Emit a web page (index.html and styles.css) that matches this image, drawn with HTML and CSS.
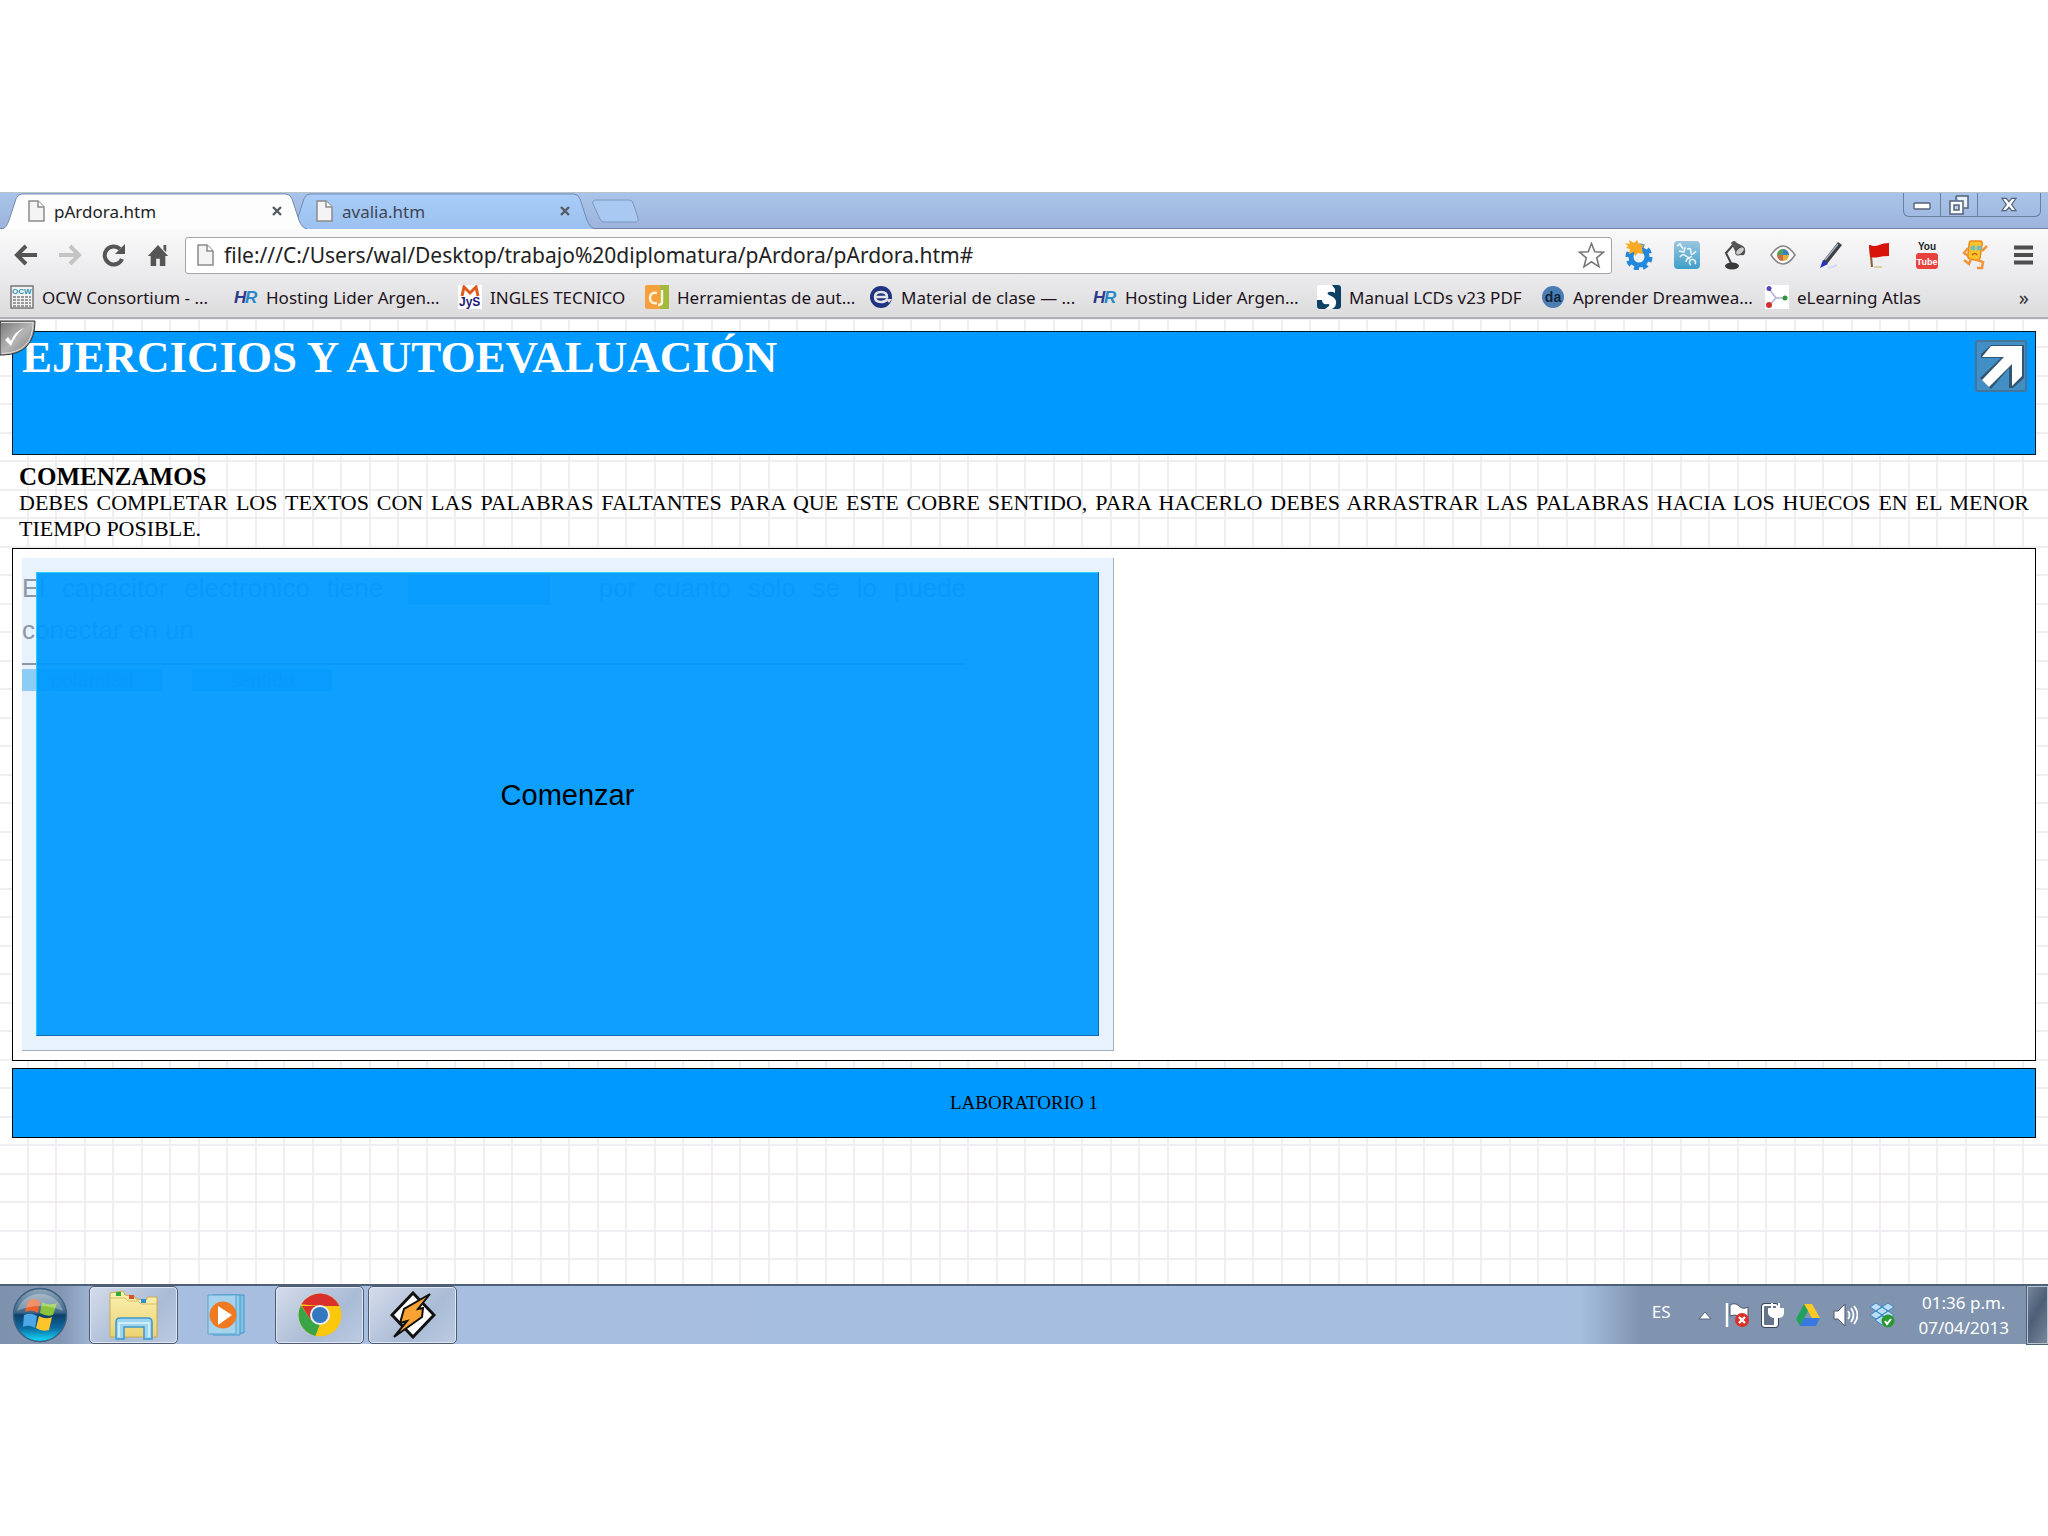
FILE: index.html
```html
<!DOCTYPE html>
<html lang="es">
<head>
  <meta charset="UTF-8">
  <meta name="viewport" content="width=device-width, initial-scale=1.0">
  <title>pArdora.htm</title>
  <link rel="stylesheet" href="styles.css">
</head>
<body>
  <svg width="0" height="0" class="defs" aria-hidden="true">
    <defs>
      <linearGradient id="tab-blue" x1="0" y1="0" x2="0" y2="1">
        <stop offset="0" stop-color="#a9cdf8"/><stop offset="1" stop-color="#9cc1f0"/>
      </linearGradient>
      <linearGradient id="orb" x1="0" y1="0" x2="0" y2="1">
        <stop offset="0" stop-color="#8fa6b8"/><stop offset=".45" stop-color="#3d6788"/>
        <stop offset=".5" stop-color="#0d3f68"/><stop offset=".75" stop-color="#0d6ca3"/><stop offset="1" stop-color="#13e0ff"/>
      </linearGradient>
      <linearGradient id="folder" x1="0" y1="0" x2="0" y2="1">
        <stop offset="0" stop-color="#fbf2b4"/><stop offset="1" stop-color="#ecd272"/>
      </linearGradient>
      <linearGradient id="metal" x1="0" y1="0" x2="1" y2="1">
        <stop offset="0" stop-color="#777"/><stop offset=".5" stop-color="#b5b5b5"/><stop offset="1" stop-color="#777"/>
      </linearGradient>
      <linearGradient id="teal" x1="0" y1="0" x2="0" y2="1">
        <stop offset="0" stop-color="#9cc6e0"/><stop offset="1" stop-color="#3d9fc9"/>
      </linearGradient>
      <symbol id="file" viewBox="0 0 17 22">
        <path d="M1 1h9l6 6v14H1z" fill="#f4f4f4" stroke="#8b8b8b" stroke-width="1.5"/>
        <path d="M10 1v6h6" fill="#fff" stroke="#8b8b8b" stroke-width="1.5"/>
      </symbol>
      <symbol id="cross" viewBox="0 0 12 12">
        <path d="M2 2l8 8M10 2l-8 8" stroke="#565b62" stroke-width="2.4"/>
      </symbol>
      <symbol id="hr" viewBox="0 0 24 24">
        <text x="0" y="18" font-family="Liberation Sans" font-size="17" font-weight="bold" font-style="italic" fill="#2d3a8c">H</text>
        <text x="11" y="18" font-family="Liberation Sans" font-size="17" font-weight="bold" font-style="italic" fill="#2a87c8">R</text>
      </symbol>
    </defs>
  </svg>

  <div class="screen">
    <header class="browser">
      <div class="tab-strip">
        <div class="tab tab-active">
          <svg class="tab-shape" viewBox="0 0 305 37" preserveAspectRatio="none"><path d="M0 37C4 36 5 33 7 28L14 6Q16 1 20 1H284Q288 1 290 6L297 28C299 33 301 36 305 37" fill="#fdfdfe" stroke="#7388ab"/></svg>
          <svg class="file-icon"><use href="#file"/></svg>
          <a class="tab-title" href="#">pArdora.htm</a>
          <button class="tab-close" aria-label="Cerrar pArdora.htm"><svg width="12" height="12"><use href="#cross"/></svg></button>
        </div>
        <div class="tab">
          <svg class="tab-shape" viewBox="0 0 305 37" preserveAspectRatio="none"><path d="M0 37C4 36 5 33 7 28L14 6Q16 1 20 1H284Q288 1 290 6L297 28C299 33 301 36 305 37" fill="url(#tab-blue)" stroke="#7388ab"/></svg>
          <svg class="file-icon"><use href="#file"/></svg>
          <a class="tab-title" href="#">avalia.htm</a>
          <button class="tab-close" aria-label="Cerrar avalia.htm"><svg width="12" height="12"><use href="#cross"/></svg></button>
        </div>
        <button class="new-tab" aria-label="Nueva pestaña"><svg width="48" height="24" viewBox="0 0 48 24"><path d="M4 1H37Q40 1 41 4L46 19Q47 23 43 23H12Q9 23 8 20L1 5Q0 1 4 1Z" fill="#a9c9f3" stroke="#7f97bd"/></svg></button>
        <div class="window-controls">
          <button aria-label="Minimizar"><svg width="18" height="12" viewBox="0 0 18 12"><rect x="1" y="4" width="16" height="6" rx="1" fill="#fff" stroke="#53627c" stroke-width="1.4"/></svg></button>
          <button aria-label="Restaurar"><svg width="20" height="20" viewBox="0 0 20 20"><path d="M7 1h12v12h-4M7 1v4" fill="#e8f0fb" stroke="#53627c" stroke-width="1.5"/><rect x="1" y="6" width="13" height="13" fill="#fff" stroke="#53627c" stroke-width="1.5"/><rect x="5" y="10" width="5" height="5" fill="#bcd0ec" stroke="#53627c" stroke-width="1.5"/></svg></button>
          <button class="close-window" aria-label="Cerrar"><svg width="16" height="15" viewBox="0 0 18 16"><path d="M1 1h5l3 4 3-4h5l-5 7 5 7h-5l-3-4-3 4H1l5-7z" fill="#fff" stroke="#53627c" stroke-width="1.4"/></svg></button>
        </div>
      </div>

      <div class="toolbar">
        <button class="nav-btn" aria-label="Atrás"><svg width="24" height="24" viewBox="0 0 24 24"><path d="M12 3L3 12l9 9M3 12h20" fill="none" stroke="#555" stroke-width="4"/></svg></button>
        <button class="nav-btn" aria-label="Adelante"><svg width="24" height="24" viewBox="0 0 24 24"><path d="M12 3l9 9-9 9M21 12H1" fill="none" stroke="#c4c4c4" stroke-width="4"/></svg></button>
        <button class="nav-btn" aria-label="Recargar"><svg width="24" height="24" viewBox="0 0 24 24"><path d="M20 16a9 9 0 1 1-2-10" fill="none" stroke="#555" stroke-width="4"/><path d="M23 1v10H13z" fill="#555"/></svg></button>
        <button class="nav-btn" aria-label="Inicio"><svg width="22" height="24" viewBox="0 0 24 24"><path d="M12 1l11 12h-3v11h-6v-8h-4v8H4V13H1z" fill="#555"/><path d="M18 1h3v8l-3-3z" fill="#555"/></svg></button>
        <div class="address">
          <svg class="file-icon"><use href="#file"/></svg>
          <input type="text" aria-label="Dirección" value="file:///C:/Users/wal/Desktop/trabajo%20diplomatura/pArdora/pArdora.htm#">
          <svg width="27" height="27" viewBox="0 0 27 27"><path d="M13.500 1.500l3.300 8.300 8.700.4-6.800 5.600 2.300 9-7.500-5-7.500 5 2.300-9L1.500 10.200l8.700-.4z" fill="#fff" stroke="#777" stroke-width="1.6"/></svg>
        </div>
        <div class="extensions">
          <button class="ext" aria-label="Engranaje"><svg width="30" height="30" viewBox="0 0 30 30"><circle cx="15" cy="17" r="11.500" fill="none" stroke="#2288dc" stroke-width="4" stroke-dasharray="5 4"/><circle cx="15" cy="17" r="8" fill="#eef2f6" stroke="#2288dc" stroke-width="5"/><path d="M1 3l5 1-1-4 5 3 3-3 2 4 5 1-2 3 1 6-5-1-3 3-1-4-5 2 1-5-4-1 2-2z" fill="#f9ab23"/></svg></button>
          <button class="ext" aria-label="Notas"><svg width="28" height="30" viewBox="0 0 28 30"><rect x="1" y="1" width="26" height="28" rx="4" fill="url(#teal)"/><path d="M4 6l3-2 3 5M6 11l5 1 1-5M14 9q4-2 4 3t5-1M7 17q3-4 6-1t6 0M13 22q1-5 4-3M18 25a3 3 0 1 1 4-1" fill="none" stroke="#e9f5fb" stroke-width="1.600"/></svg></button>
          <button class="ext" aria-label="Lámpara"><svg width="26" height="30" viewBox="0 0 26 30"><path d="M12 4L4 13l6 12" fill="none" stroke="#444" stroke-width="2"/><path d="M9 3q3-4 6 0l6 3q4 4 1 9-6 1-9-4z" fill="#555"/><ellipse cx="18" cy="11" rx="5" ry="3" transform="rotate(-40 18 11)" fill="#ccc" stroke="#444"/><ellipse cx="10" cy="26" rx="7" ry="3.500" fill="#3a3a3a"/></svg></button>
          <button class="ext" aria-label="Ojo"><svg width="26" height="22" viewBox="0 0 26 22"><path d="M1 11Q13-7 25 11 13 29 1 11z" fill="#fafafa" stroke="#888" stroke-width="1.600"/><circle cx="13" cy="11" r="6" fill="#ddb33c"/><path d="M13 5a6 6 0 0 0-6 6h6z" fill="#4fa35a"/><path d="M13 5a6 6 0 0 1 6 6h-6z" fill="#3e7fc4"/><path d="M7 11a6 6 0 0 0 6 6v-6z" fill="#d16a47"/></svg></button>
          <button class="ext" aria-label="Lápiz"><svg width="26" height="28" viewBox="0 0 26 28"><path d="M20 1l4 3L9 23l-4-3z" fill="#3b4048"/><path d="M20 3L7 19" stroke="#a9b3c2" stroke-width="1.500"/><path d="M5 19l5 4-8 4z" fill="#2431bd"/><path d="M10 27q6-1 9-3" fill="none" stroke="#cfd7f5" stroke-width="2"/></svg></button>
          <button class="ext" aria-label="Bandera"><svg width="24" height="26" viewBox="0 0 24 26"><path d="M3 3l2 22" stroke="#8a5a32" stroke-width="2"/><path d="M2 3q6 2 10 0t10-2v13q-6 0-10 1t-9 0z" fill="#d8130c"/><path d="M7 25h8" stroke="#d9cfa0" stroke-width="2"/></svg></button>
          <button class="ext" aria-label="YouTube"><svg width="26" height="30" viewBox="0 0 26 30"><text x="13" y="10" text-anchor="middle" font-family="Liberation Sans" font-size="10" font-weight="bold" fill="#222">You</text><rect x="2" y="13" width="22" height="16" rx="3" fill="#e8423f"/><text x="13" y="25" text-anchor="middle" font-family="Liberation Sans" font-size="9" font-weight="bold" fill="#fff">Tube</text></svg></button>
          <button class="ext" aria-label="Muñeco"><svg width="26" height="30" viewBox="0 0 26 30"><path d="M9 1h9q3 0 2 4l-2 13q-1 3-5 2l-5-1q-3-1-2-5l1-9q0-4 2-4z" fill="#fac327" stroke="#ec8a25" stroke-width="1.500"/><path d="M6 8L2 13l4 3M20 11l5-5M9 19l-2 5-5-4M15 20l6 2-1 6h-5" fill="none" stroke="#f2953a" stroke-width="2.500"/><circle cx="11" cy="8" r="2.500" fill="#6bbfc7"/><circle cx="17" cy="8" r="2.500" fill="#6bbfc7"/><path d="M10 15q3-3 5 0" fill="none" stroke="#c55d16" stroke-width="1.500"/></svg></button>
          <button class="ext" aria-label="Menú"><svg width="19" height="20" viewBox="0 0 19 20"><path d="M0 2.500h19M0 10h19M0 17.500h19" stroke="#4e4e4e" stroke-width="4.200"/></svg></button>
        </div>
      </div>

      <nav class="bookmarks">
        <a href="#"><svg width="24" height="24" viewBox="0 0 24 24"><rect x="1" y="1" width="22" height="22" fill="#f2f2f2" stroke="#777" stroke-width="1.500"/><text x="2" y="9" font-family="Liberation Sans" font-size="8" font-weight="bold" fill="#2d93b6">OCW</text><path d="M3 12h18M3 15h18M3 18h18M3 21h18" stroke="#999" stroke-width="2" stroke-dasharray="3 1"/></svg>OCW Consortium - ...</a>
        <a href="#"><svg width="24" height="24"><use href="#hr"/></svg>Hosting Lider Argen...</a>
        <a class="short" href="#"><svg width="24" height="24" viewBox="0 0 24 24"><rect width="24" height="24" fill="#fff"/><path d="M4 11l2-9 6 6 6-6 2 9" fill="none" stroke="#e0591c" stroke-width="3"/><text x="1" y="21" font-family="Liberation Sans" font-size="12" font-weight="bold" fill="#1d1c74">JyS</text></svg>INGLES TECNICO</a>
        <a href="#"><svg width="24" height="24" viewBox="0 0 24 24"><rect width="24" height="24" rx="2" fill="#f5a03c"/><path d="M15 0h9v24h-9z" fill="#a3ba3c"/><path d="M12 8q-7-1-7 5t7 5M17 5v12q0 3-4 3" fill="none" stroke="#fff3d8" stroke-width="2.500"/></svg>Herramientas de aut...</a>
        <a href="#"><svg width="24" height="24" viewBox="0 0 24 24"><circle cx="12" cy="12" r="11" fill="#1e3480"/><path d="M7 12h11q0-5-6-5t-6 5 6 5q4 0 7-3" fill="none" stroke="#e4e4e8" stroke-width="2.500"/><path d="M17 14h6l-3 4z" fill="#e2e1e2"/></svg>Material de clase — ...</a>
        <a href="#"><svg width="24" height="24"><use href="#hr"/></svg>Hosting Lider Argen...</a>
        <a href="#"><svg width="24" height="24" viewBox="0 0 24 24"><rect width="24" height="24" rx="3" fill="#fff"/><path d="M15 0h6q3 0 3 3v18q0 3-3 3h-6q5-3 4-8-1-4-7-6-3-2 0-3t6 1V4zM0 15h5q0 5 6 4 2 0 1 2l-4 3H3q-3 0-3-3z" fill="#0d4164"/></svg>Manual LCDs v23 PDF</a>
        <a href="#"><svg width="24" height="24" viewBox="0 0 24 24"><circle cx="12" cy="12" r="11" fill="#4a7db2"/><text x="12" y="17" text-anchor="middle" font-family="Liberation Sans" font-size="14" font-weight="bold" fill="#10243c">da</text></svg>Aprender Dreamwea...</a>
        <a href="#"><svg width="24" height="24" viewBox="0 0 24 24"><rect width="24" height="24" fill="#fff"/><path d="M4 4l7 9-7 7M11 13h9" fill="none" stroke="#b5afd8" stroke-width="1.500"/><circle cx="4" cy="3.500" r="2.500" fill="#5246be"/><circle cx="20" cy="13" r="2.500" fill="#2c9a3c"/><circle cx="4" cy="20" r="3" fill="#d42f2c"/></svg>eLearning Atlas</a>
        <button class="more" aria-label="Más marcadores">»</button>
      </nav>
    </header>

    <main class="page">
      <button class="grip" aria-label="Comprobar"><svg width="36" height="36" viewBox="0 0 36 36"><path d="M0 1h35q0 33-32 34H0z" fill="url(#metal)" stroke="#333"/><path d="M1 2.500h32q0 30-31 31" fill="none" stroke="#ddd"/><path d="M5 20l6 6Q15 15 24 8q-9 3-13 13l-3-4z" fill="#fff"/></svg></button>

      <section class="banner">
        <h1>EJERCICIOS Y AUTOEVALUACIÓN</h1>
        <button class="open-btn" aria-label="Abrir"><svg width="52" height="52" viewBox="0 0 52 52"><rect x="1" y="1" width="50" height="50" rx="2" fill="#428fc6" stroke="#45759a" stroke-width="2"/><path d="M16 5H49V38L38 48H34V28L16 49 5 38 26 18H6V14z" fill="#315572"/><path d="M16 6H47V36L37 46V24L14 47 7 40 29 17H7z" fill="#fff"/></svg></button>
      </section>

      <section class="intro">
        <h2>COMENZAMOS</h2>
        <p>DEBES COMPLETAR LOS TEXTOS CON LAS PALABRAS FALTANTES PARA QUE ESTE COBRE SENTIDO, PARA HACERLO DEBES ARRASTRAR LAS PALABRAS HACIA LOS HUECOS EN EL MENOR TIEMPO POSIBLE.</p>
      </section>

      <section class="activity">
        <div class="panel">
          <div class="exercise">
            <p>El capacitor electronico tiene <span class="gap"></span> por cuanto solo se lo puede conectar en un</p>
            <div class="words"><span>polaridad</span><span>sentido</span></div>
          </div>
          <button class="start">Comenzar</button>
        </div>
      </section>

      <footer class="foot">LABORATORIO 1</footer>
    </main>

    <div class="taskbar">
      <button class="start-orb" aria-label="Inicio"><svg width="56" height="56" viewBox="0 0 56 56"><circle cx="28" cy="28" r="26.500" fill="url(#orb)" stroke="#3c5f82" stroke-width="1.500"/><path d="M16 14q6-4 12 0l-2 12q-6-4-13-1z" fill="#ea6230"/><path d="M30 15q6 4 15 1l-4 12q-6 2-13-2z" fill="#8cc43c"/><path d="M12 28q7-3 13 1l-2 12q-6-4-12-1z" fill="#4ca6e8"/><path d="M27 29q7 4 13 1l-3 13q-7 2-13-2z" fill="#fcc52c"/><path d="M5 24A24 24 0 0 1 51 24Q28 14 5 24z" fill="#fff" opacity=".3"/></svg></button>
      <button class="task" aria-label="Explorador"><svg width="50" height="50" viewBox="0 0 50 50"><path d="M1 47V3L14 1l2 4 9 1 2 3 10 1 2-3h9v40z" fill="url(#folder)" stroke="#c9ab50"/><path d="M1 8h15l3 3h10l3 3h16" fill="none" stroke="#d8bd66"/><rect x="7" y="2" width="5" height="4" fill="#2fae37"/><rect x="20" y="5" width="5" height="4" fill="#d8502c"/><rect x="32" y="9" width="5" height="4" fill="#2e91d0"/><path d="M7 49V32q0-4 4-4h28q4 0 4 4v17h-8V37H15v12z" fill="#9dd5f1" stroke="#3d98cb" stroke-width="1.500"/><path d="M10 47V33h30v14" fill="none" stroke="#dff3fc" stroke-width="1.500"/></svg></button>
      <button class="task task-plain" aria-label="Reproductor"><svg width="44" height="44" viewBox="0 0 44 44"><path d="M10 2h27v38H10z" fill="#7fc2e8" stroke="#4698c6"/><path d="M6 2h27v40H6z" fill="#90cdec" stroke="#4698c6"/><path d="M1 2h28v39H1z" fill="#a5d3ee" stroke="#5aa3cf"/><circle cx="16" cy="22" r="13.500" fill="#f07a22"/><path d="M11 13v19l14-10z" fill="#fff"/></svg></button>
      <button class="task" aria-label="Chrome"><svg width="46" height="46" viewBox="0 0 46 46"><circle cx="23" cy="23" r="21.500" fill="#fcc70c"/><path d="M4.400 12.300A21.500 21.500 0 0 1 42.500 14H23z" fill="#d9302c"/><path d="M23 14H4.800l9 14z" fill="#d9302c"/><path d="M3.800 13.500l10 14 9 5-4.500 11.500A21.500 21.500 0 0 1 3.800 13.500z" fill="#3aa547"/><circle cx="23" cy="23" r="10" fill="#e9eef2"/><circle cx="23" cy="23" r="8" fill="#3478c0"/></svg></button>
      <button class="task" aria-label="Winamp"><svg width="46" height="48" viewBox="0 0 46 48"><path d="M23 2l21 22-21 22L2 24z" fill="#fff" stroke="#111" stroke-width="3"/><path d="M40 3L14 18l-4 14 7-2L4 46l28-20 1-9-5 1z" fill="#f8a334" stroke="#111" stroke-width="2"/></svg></button>
      <div class="tray">
        <span class="lang">ES</span>
        <svg width="18" height="12" viewBox="-3 -2 18 12"><path d="M6 1l6 7H0z" fill="#fff" stroke="#55647c"/></svg>
        <svg width="24" height="26" viewBox="0 0 24 26"><path d="M2 1v24" stroke="#fff" stroke-width="2.500"/><path d="M5 3q5-3 9 1t9 1v10q-5 1-9-1t-9 0z" fill="#fff" stroke="#4a5668"/><circle cx="17" cy="18" r="7" fill="#dc2f27"/><path d="M14 15l6 6M20 15l-6 6" stroke="#fff" stroke-width="2.400"/></svg>
        <svg width="24" height="26" viewBox="0 0 24 26"><rect x="3" y="3" width="14" height="21" rx="2" fill="none" stroke="#39465a" stroke-width="4"/><rect x="3" y="3" width="14" height="21" rx="2" fill="#64748c" stroke="#fff" stroke-width="2"/><path d="M12 1v6M19 1v6M9 7h14v4q0 4-5 4h-3q-5 0-6-4zM15 15v9" fill="#fff" stroke="#fff" stroke-width="2"/></svg>
        <svg width="26" height="24" viewBox="0 0 26 24"><path d="M9 1h8l8 14h-8z" fill="#fbc926"/><path d="M9 1L1 16l4 7 8-15z" fill="#22a25c"/><path d="M9 15h16l-4 8H5z" fill="#3879e0"/></svg>
        <svg width="26" height="26" viewBox="0 0 26 26"><path d="M2 9h4l7-7v22l-7-7H2z" fill="#fff" stroke="#4a5668"/><path d="M16 9q3 4 0 8M19 6q5 7 0 14M22 4q7 9 0 18" fill="none" stroke="#fff" stroke-width="1.800"/></svg>
        <svg width="26" height="26" viewBox="0 0 26 26"><path d="M7 1l6 4-6 4-6-4zM19 1l6 4-6 4-6-4zM7 9l6 4-6 4-6-4zM19 9l6 4-6 4-6-4zM13 5l6 4-6 4-6-4zM6 18l7-4 7 4-7 5z" fill="#b9def6" stroke="#3b86c2"/><circle cx="19" cy="19" r="6.500" fill="#2a9735"/><path d="M16 19l2 3 4-5" fill="none" stroke="#fff" stroke-width="2"/></svg>
        <div class="clock">01:36 p.m.<br>07/04/2013</div>
        <button class="show-desktop" aria-label="Mostrar escritorio"></button>
      </div>
    </div>
  </div>
</body>
</html>
```
FILE: styles.css
```css
* {
  box-sizing: border-box;
}
body {
  margin: 0;
  background: #fff;
  font-family: "Noto Sans", sans-serif;
}
button {
  padding: 0;
  border: none;
  background: none;
  font-family: inherit;
  cursor: pointer;
}
a {
  color: inherit;
  text-decoration: none;
}
svg {
  display: block;
  flex: none;
}
.defs {
  position: absolute;
}
.screen {
  min-height: 100vh;
  display: flex;
  flex-direction: column;
  justify-content: center;
}

/* Tabs */
.tab-strip {
  display: flex;
  height: 37px;
  padding-left: 2px;
  background: linear-gradient(#a9c4e8, #9db4de);
  border-top: 1px solid #b8c4cc;
  border-bottom: 1px solid #7184a6;
}
.tab {
  position: relative;
  z-index: 0;
  display: flex;
  align-items: center;
  width: 305px;
  height: 36px;
  padding: 0 24px 0 26px;
  margin-left: -17px;
  font-size: 17px;
  color: #3e4654;
}
.tab-active {
  z-index: 1;
  margin-left: 0;
  color: #222;
}
.tab-shape {
  position: absolute;
  inset: 0;
  z-index: -1;
  width: 100%;
  height: 100%;
}
.file-icon {
  width: 17px;
  height: 22px;
}
.tab-title {
  flex: 1;
  margin-left: 9px;
}
.new-tab {
  align-self: center;
  margin-left: -3px;
}
.window-controls {
  display: flex;
  height: 24px;
  margin-left: auto;
  margin-right: 7px;
  border: 1px solid #6b7f9f;
  border-top: none;
  border-radius: 0 0 6px 6px;
}
.window-controls button {
  display: flex;
  align-items: center;
  justify-content: center;
  width: 37px;
  border-right: 1px solid #6b7f9f;
}
.window-controls .close-window {
  width: 62px;
  border-right: none;
}

/* Toolbar */
.toolbar {
  display: flex;
  align-items: center;
  height: 52px;
  padding: 0 1px 0 4px;
  background: linear-gradient(#fafafb, #e9e8ea);
}
.nav-btn {
  display: flex;
  justify-content: center;
  width: 44px;
}
.address {
  flex: 1;
  display: flex;
  align-items: center;
  height: 37px;
  margin-left: 5px;
  padding: 0 6px 0 11px;
  background: #fff;
  border: 1px solid #a5a5a8;
  border-radius: 3px;
}
.address input {
  flex: 1;
  margin-left: 10px;
  padding: 0;
  border: none;
  outline: none;
  background: none;
  font-family: "Noto Sans", sans-serif;
  font-size: 21px;
  color: #222;
}
.extensions {
  display: flex;
  margin-left: 3px;
}
.ext {
  display: flex;
  align-items: center;
  justify-content: center;
  width: 48px;
}

/* Bookmarks */
.bookmarks {
  display: flex;
  align-items: center;
  height: 38px;
  padding: 0 19px 4px 10px;
  background: linear-gradient(#e9e8ea, #dddcdd);
  border-bottom: 2px solid #b0b0b2;
}
.bookmarks a {
  display: flex;
  align-items: center;
  gap: 8px;
  width: 224px;
  font-size: 17px;
  color: #1c1420;
  white-space: nowrap;
}
.bookmarks .short {
  width: 187px;
}
.more {
  margin-left: auto;
  font-size: 20px;
  color: #333;
}

/* Page */
.page {
  position: relative;
  padding: 12px 12px 146px;
  font-family: Georgia, "Liberation Serif", serif;
  background-color: #fff;
  background-image:
    linear-gradient(90deg, transparent 27px, #f0eef3 27px, #f0eef3 29px, transparent 29px, transparent 55px, #f0eef3 55px),
    linear-gradient(#f0eef3 1px, transparent 1px, transparent 27px, #f0eef3 27px, #f0eef3 29px, transparent 29px, transparent 56px, #f0eef3 56px);
  background-size: 57px 57px;
}
.grip {
  position: absolute;
  top: 1px;
  left: 0;
}
.banner {
  display: flex;
  justify-content: space-between;
  align-items: flex-start;
  height: 124px;
  padding: 0 8px 0 9px;
  background: #09f;
  border: 1px solid #001a2c;
}
.banner h1 {
  margin: 0;
  font-size: 45px;
  line-height: 50px;
  color: #fff;
}
.open-btn {
  margin-top: 8px;
}
.intro {
  padding: 9px 7px 6px;
  font-size: 22px;
  line-height: 26px;
  text-align: justify;
}
.intro h2 {
  margin: 0;
  font-size: 25px;
}
.intro p {
  margin: 0;
}
.activity {
  padding: 9px;
  background: #fff;
  border: 1px solid #000;
}
.panel {
  position: relative;
  width: 55%;
  max-width: 1092px;
  height: 493px;
  background: #e8f2fd;
  border-right: 1px solid #a3b0c0;
  border-bottom: 1px solid #a3b0c0;
}
.exercise {
  width: 944px;
  padding-top: 9px;
  font-family: "Liberation Sans", Arial, sans-serif;
  font-size: 26px;
  line-height: 42px;
  color: #8b97a8;
}
.exercise p {
  margin: 0;
  padding-bottom: 12px;
  text-align: justify;
  border-bottom: 2px solid #8b97a8;
}
.gap {
  display: inline-block;
  width: 142px;
  height: 30px;
  margin: 0 32px 0 8px;
  vertical-align: middle;
  background: #8cccf5;
}
.words {
  display: flex;
  gap: 30px;
  padding-top: 4px;
}
.words span {
  width: 140px;
  height: 22px;
  font-size: 20px;
  line-height: 22px;
  text-align: center;
  background: #8cccf5;
}
.start {
  position: absolute;
  inset: 14px;
  padding-bottom: 18px;
  font-family: "Liberation Sans", Arial, sans-serif;
  font-size: 29px;
  color: #000;
  background: rgba(0, 153, 255, 0.94);
  border: 1px solid;
  border-color: #1fd0ff #1468b0 #1468b0 #1fd0ff;
}
.foot {
  margin-top: 7px;
  padding: 21px 0;
  font-size: 19px;
  line-height: 26px;
  text-align: center;
  background: #09f;
  border: 1px solid #000;
}

/* Taskbar */
.taskbar {
  display: flex;
  height: 60px;
  padding-left: 12px;
  background: linear-gradient(90deg, #7e91ad, #8295b1 60px, #a7bee0 100px, #a6bfdf);
  border-top: 2px solid #4e6076;
}
.start-orb {
  margin-right: 21px;
}
.task {
  display: flex;
  align-items: center;
  justify-content: center;
  width: 89px;
  margin-right: 4px;
  border: 1px solid #4f5b70;
  border-radius: 5px;
  box-shadow: inset 0 0 0 1px #dfe7f3;
  background: linear-gradient(135deg, #d4dcea, #aabbd6 60%, #bccbe2);
}
.task-plain {
  border-color: transparent;
  box-shadow: none;
  background: none;
  padding-left: 4px;
}
.tray {
  display: flex;
  align-items: center;
  gap: 11px;
  margin-left: auto;
  padding-left: 72px;
  background: linear-gradient(90deg, #a6bfdf, #8094af 60px, #8094af);
  color: #fff;
  font-size: 17px;
}
.lang {
  margin-right: 14px;
  padding-bottom: 8px;
}
.clock {
  margin: 0 7px 0 13px;
  line-height: 25px;
  text-align: center;
}
.show-desktop {
  align-self: stretch;
  width: 21px;
  border: 1px solid #b9c4d2;
  outline: 1px solid #4e6076;
  background: linear-gradient(120deg, #75859a, #4d5f77 45%, #77879b);
}
```
